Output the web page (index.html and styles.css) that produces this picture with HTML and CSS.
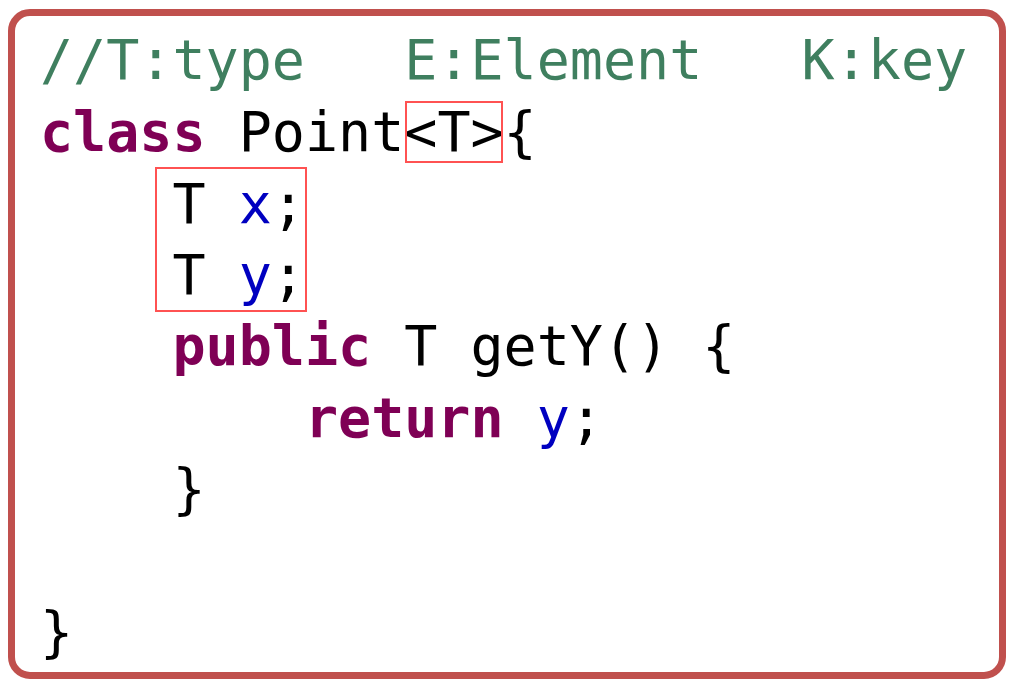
FILE: index.html
```html
<!DOCTYPE html>
<html>
<head>
<meta charset="utf-8">
<link rel="stylesheet" href="styles.css">
</head>
<body>
<div class="frame">
  <div class="code">
    <div class="line comment">//T:type   E:Element   K:key</div>
    <div class="line"><span class="kw">class</span> Point<span class="mark">&lt;T&gt;</span>{</div>
    <div class="group">
      <div class="line">T <span class="field">x</span>;</div>
      <div class="line">T <span class="field">y</span>;</div>
    </div>
    <div class="line">    <span class="kw">public</span> T getY() {</div>
    <div class="line">        <span class="kw">return</span> <span class="field">y</span>;</div>
    <div class="line">    }</div>
    <div class="line"> </div>
    <div class="line">}</div>
  </div>
</div>
</body>
</html>
```

FILE: styles.css
```css
html, body {
  margin: 0;
  padding: 0;
  background: #ffffff;
}
.frame {
  box-sizing: border-box;
  width: 998px;
  height: 670px;
  margin: 9px 0 0 8px;
  border: 7px solid #c0504d;
  border-radius: 22px;
  padding: 9px 0 0 25px;
  overflow: hidden;
}
.code {
  font-family: "DejaVu Sans Mono", "Liberation Mono", monospace;
  font-size: 55px;
  line-height: 71.5px;
  color: #000000;
}
.line {
  height: 71.5px;
  white-space: pre;
}
.comment {
  color: #3f7f5f;
}
.kw {
  color: #7f0055;
  font-weight: bold;
}
.field {
  color: #0000c0;
}
.mark {
  outline: 2px solid #ff5252;
  outline-offset: -3px;
}
.group {
  box-sizing: border-box;
  width: fit-content;
  margin-left: calc(4ch - 17px);
  padding-left: 15px;
  border: 2px solid #ff5252;
  margin-top: -1px;
  margin-bottom: -1px;
}
.group .line {
  height: 70.5px;
}
```
